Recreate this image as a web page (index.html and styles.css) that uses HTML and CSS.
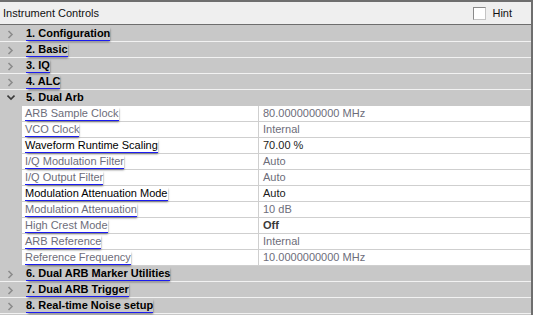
FILE: index.html
```html
<!DOCTYPE html>
<html lang="en">
<head>
    <meta charset="UTF-8">
    <title>Instrument Controls</title>
    <link rel="stylesheet" href="styles.css">
</head>
<body>
    <div class="panel">
        <div class="header">
            <span class="title">Instrument Controls</span>
            <label class="hint"><span class="check"></span>Hint</label>
        </div>
        <div class="grid">
            <div class="cat">
                <svg class="chev" width="8" height="15" viewBox="0 0 8 15"><polyline points="1.5,5 5,8.5 1.5,12" /></svg>
                <span class="link">1. Configuration</span>
            </div>
            <div class="cat">
                <svg class="chev" width="8" height="15" viewBox="0 0 8 15"><polyline points="1.5,5 5,8.5 1.5,12" /></svg>
                <span class="link">2. Basic</span>
            </div>
            <div class="cat">
                <svg class="chev" width="8" height="15" viewBox="0 0 8 15"><polyline points="1.5,5 5,8.5 1.5,12" /></svg>
                <span class="link">3. IQ</span>
            </div>
            <div class="cat">
                <svg class="chev" width="8" height="15" viewBox="0 0 8 15"><polyline points="1.5,5 5,8.5 1.5,12" /></svg>
                <span class="link">4. ALC</span>
            </div>
            <div class="cat open">
                <svg class="chev down" width="8" height="15" viewBox="0 0 8 15"><polyline points="0.5,5.5 4,9 7.5,5.5" /></svg>
                <span class="name-plain">5. Dual Arb</span>
            </div>

            <div class="props">
                <div class="prop off">
                    <div class="pname"><span class="link">ARB Sample Clock</span></div>
                    <div class="pval">80.0000000000 MHz</div>
                </div>
                <div class="prop off">
                    <div class="pname"><span class="link">VCO Clock</span></div>
                    <div class="pval">Internal</div>
                </div>
                <div class="prop">
                    <div class="pname"><span class="link">Waveform Runtime Scaling</span></div>
                    <div class="pval">70.00 %</div>
                </div>
                <div class="prop off">
                    <div class="pname"><span class="link">I/Q Modulation Filter</span></div>
                    <div class="pval">Auto</div>
                </div>
                <div class="prop off">
                    <div class="pname"><span class="link">I/Q Output Filter</span></div>
                    <div class="pval">Auto</div>
                </div>
                <div class="prop">
                    <div class="pname"><span class="link">Modulation Attenuation Mode</span></div>
                    <div class="pval">Auto</div>
                </div>
                <div class="prop off">
                    <div class="pname"><span class="link">Modulation Attenuation</span></div>
                    <div class="pval">10 dB</div>
                </div>
                <div class="prop off">
                    <div class="pname"><span class="link">High Crest Mode</span></div>
                    <div class="pval bold">Off</div>
                </div>
                <div class="prop off">
                    <div class="pname"><span class="link">ARB Reference</span></div>
                    <div class="pval">Internal</div>
                </div>
                <div class="prop off">
                    <div class="pname"><span class="link">Reference Frequency</span></div>
                    <div class="pval">10.0000000000 MHz</div>
                </div>
            </div>

            <div class="cat">
                <svg class="chev" width="8" height="15" viewBox="0 0 8 15"><polyline points="1.5,5 5,8.5 1.5,12" /></svg>
                <span class="link">6. Dual ARB Marker Utilities</span>
            </div>
            <div class="cat">
                <svg class="chev" width="8" height="15" viewBox="0 0 8 15"><polyline points="1.5,5 5,8.5 1.5,12" /></svg>
                <span class="link">7. Dual ARB Trigger</span>
            </div>
            <div class="cat last">
                <svg class="chev" width="8" height="15" viewBox="0 0 8 15"><polyline points="1.5,5 5,8.5 1.5,12" /></svg>
                <span class="link">8. Real-time Noise setup</span>
            </div>
        </div>
    </div>
</body>
</html>
```

FILE: styles.css
```css
body {
    margin: 0;
    font-family: "Liberation Sans", Arial, sans-serif;
    font-size: 11px;
    color: #000;
    background-color: #6e6e6e;
}

.panel {
    width: 531px;
    height: 313px;
    margin-top: 2px;
    background-color: #c8c8c8;
    overflow: hidden;
}

.header {
    height: 22px;
    border-bottom: 1px solid #6e6e6e;
    background-color: #efefef;
    display: flex;
    align-items: center;
    justify-content: space-between;
    padding-left: 3px;
    padding-right: 19px;
}

.title {
    color: #111;
}

.hint {
    display: flex;
    align-items: center;
    gap: 6px;
    color: #111;
}

.check {
    width: 11px;
    height: 11px;
    margin-left: 1px;
    background-color: #fff;
    border: 1px solid #8a8a8a;
    border-right-color: #c4c4c4;
    border-bottom-color: #c4c4c4;
}

.grid {
    padding-top: 1px;
}

.cat {
    height: 15px;
    border-bottom: 1px solid #f2f2f2;
    display: flex;
    align-items: flex-start;
    padding-left: 7px;
    font-weight: bold;
}

.cat.open {
    border-bottom-color: #c8c8c8;
}

.chev {
    flex: none;
    margin-right: 11px;
}

.chev polyline {
    fill: none;
    stroke: #8c8c8c;
    stroke-width: 1.6;
}

.chev.down polyline {
    stroke: #3a3a3a;
}

.link {
    display: inline-block;
    line-height: 14px;
    border-bottom: 1px solid #1c1cf0;
    box-shadow: 1px 2px 2px -1px rgba(0, 0, 0, 0.5);
}

.name-plain {
    line-height: 15px;
}

.props {
    margin-left: 22px;
    margin-right: 1px;
}

.prop {
    height: 15px;
    border-bottom: 1px solid #cfcfcf;
    background-color: #fff;
    display: flex;
}

.pname {
    width: 233px;
    padding-left: 3px;
    border-right: 1px solid #cfcfcf;
}

.pval {
    padding-left: 4px;
    line-height: 15px;
    color: #1a1a1a;
}

.prop.off .link,
.prop.off .pval {
    color: #6d6d7a;
}

.prop.off .pval.bold {
    font-weight: bold;
    color: #3a3a3a;
}
```
